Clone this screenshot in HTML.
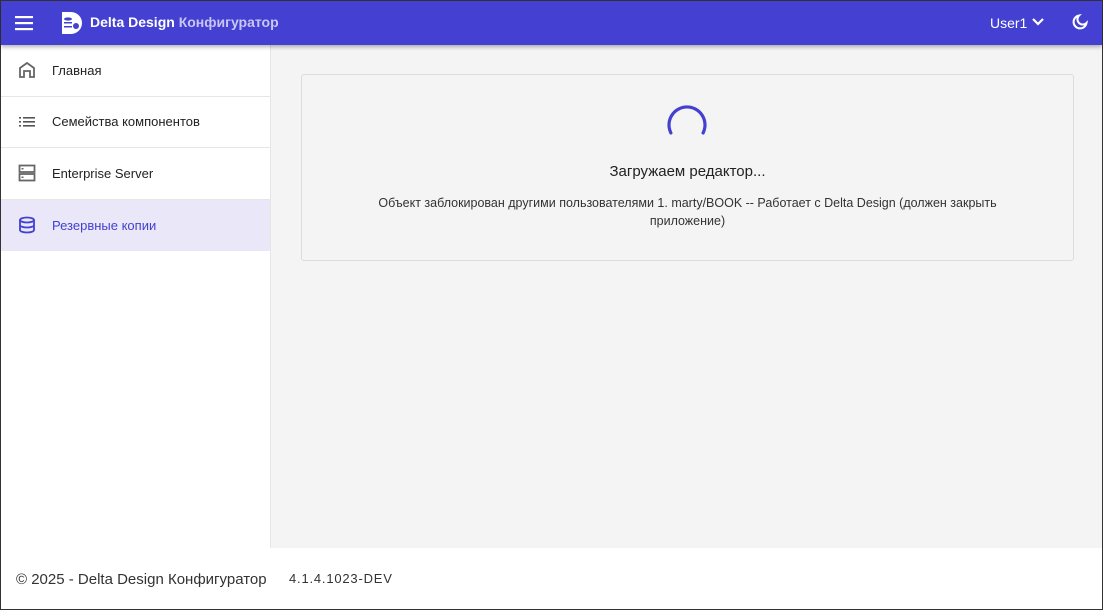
<!DOCTYPE html>
<html><head><meta charset="utf-8"><style>
*{box-sizing:border-box;margin:0;padding:0}
body{width:1103px;height:610px;overflow:hidden;font-family:"Liberation Sans",sans-serif;background:#fff;position:relative;border:1px solid #333;}
.hdr{position:absolute;left:0;top:0;width:1101px;height:44px;background:#4440d2;box-shadow:0 2px 4px rgba(0,0,0,.3);color:#fff;z-index:2}
.side{position:absolute;left:0;top:44px;width:270px;height:503px;background:#fff;border-right:1px solid #e6e6e6}
.item{height:51.5px;display:flex;align-items:center;border-bottom:1px solid #e6e6e6;font-size:13px;color:#222}
.item svg{margin-left:17px;margin-right:16px}
.item.act{background:#e9e7f8;color:#4440d2;border-bottom:none}
.main{position:absolute;left:270px;top:44px;width:831px;height:503px;background:#f4f4f4}
.card{position:absolute;left:30px;top:29px;width:773px;height:187px;border:1px solid #dcdcdc;border-radius:3px;text-align:center}
.foot{position:absolute;left:0;top:547px;width:1101px;height:61px;background:#fff;font-size:14px;color:#333}
</style></head><body>
<div class="hdr">
<svg style="position:absolute;left:14px;top:14px" width="18" height="16"><rect y="1" width="18" height="2.2" fill="#fff"/><rect y="7" width="18" height="2.2" fill="#fff"/><rect y="13" width="18" height="2.2" fill="#fff"/></svg>
<svg style="position:absolute;left:59px;top:10px" width="24" height="24" viewBox="0 0 24 24"><path d="M2 1h9a11 11 0 0 1 0 22H2z" fill="#fff"/><ellipse cx="8" cy="8" rx="4" ry="1.6" fill="#4440d2"/><rect x="4" y="11" width="8" height="1.5" fill="#4440d2"/><rect x="4" y="15" width="8" height="1.5" fill="#4440d2"/><circle cx="16" cy="15" r="3" fill="#4440d2"/></svg>
<div style="position:absolute;left:89px;top:13px;font-size:14px;font-weight:bold">Delta Design <span style="color:#c8c6f2">Конфигуратор</span></div>
<div style="position:absolute;left:989px;top:14px;font-size:14px">User1</div>
<svg style="position:absolute;left:1031px;top:16px" width="12" height="10"><path d="M1 2l5 5 5-5" stroke="#fff" stroke-width="2.2" fill="none"/></svg>
<svg style="position:absolute;left:1071px;top:13px" width="16" height="16" viewBox="0 0 16 16"><path d="M7 1.5A6.5 6.5 0 1 0 14.5 9 5 5 0 0 1 7 1.5z" fill="none" stroke="#fff" stroke-width="2"/></svg>
</div>
<div class="side">
<div class="item"><svg width="18" height="18" viewBox="0 0 18 18"><path d="M2 16V7l7-5 7 5v9h-4v-6H6v6z" fill="none" stroke="#666" stroke-width="1.8"/></svg>Главная</div>
<div class="item"><svg width="18" height="18" viewBox="0 0 18 18"><g fill="#555"><rect x="1" y="4" width="2" height="1.6"/><rect x="5" y="4" width="12" height="1.6"/><rect x="1" y="8" width="2" height="1.6"/><rect x="5" y="8" width="12" height="1.6"/><rect x="1" y="12" width="2" height="1.6"/><rect x="5" y="12" width="12" height="1.6"/></g></svg>Семейства компонентов</div>
<div class="item"><svg width="18" height="18" viewBox="0 0 18 18"><g fill="none" stroke="#666" stroke-width="1.8"><rect x="1.5" y="1.5" width="15" height="6.5"/><rect x="1.5" y="10" width="15" height="6.5"/></g><rect x="3.5" y="4" width="2" height="1.5" fill="#666"/><rect x="3.5" y="12.5" width="2" height="1.5" fill="#666"/></svg>Enterprise Server</div>
<div class="item act"><svg width="18" height="18" viewBox="0 0 18 18"><g fill="none" stroke="#4440d2" stroke-width="1.8"><ellipse cx="9" cy="4" rx="7" ry="2.5"/><path d="M2 4v10c0 1.4 3 2.5 7 2.5s7-1.1 7-2.5V4M2 9c0 1.4 3 2.5 7 2.5s7-1.1 7-2.5"/></g></svg>Резервные копии</div>
</div>
<div class="main"><div class="card">
<svg style="position:absolute;left:365px;top:30px" width="40" height="40" viewBox="0 0 40 40"><path d="M3.9 28A18 18 0 1 1 36.1 28" fill="none" stroke="#4440d2" stroke-width="3.2" stroke-linecap="round"/></svg>
<div style="position:absolute;top:88px;width:100%;font-size:15px;color:#222">Загружаем редактор...</div>
<div style="position:absolute;top:119px;left:58px;right:58px;font-size:12.5px;line-height:18px;color:#333">Объект заблокирован другими пользователями 1. marty/BOOK -- Работает с Delta Design (должен закрыть приложение)</div>
</div></div>
<div class="foot"><span style="position:absolute;left:15px;top:23px;font-size:15px">© 2025 - Delta Design Конфигуратор</span><span style="position:absolute;left:288px;top:23px;font-size:13px;letter-spacing:.8px">4.1.4.1023-DEV</span></div>
</body></html>
